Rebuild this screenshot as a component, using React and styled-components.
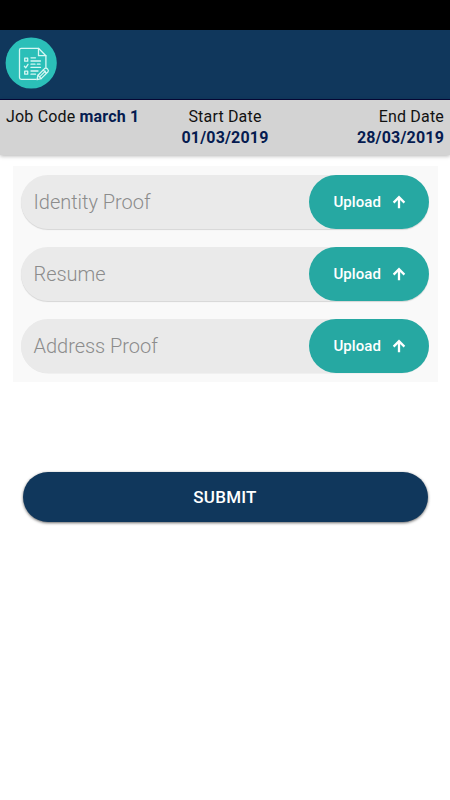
import React from 'react';
import styled, { createGlobalStyle } from 'styled-components';

const GlobalStyle = createGlobalStyle`
  * {
    box-sizing: border-box;
  }

  body {
    margin: 0;
    background: #ffffff;
    font-family: Roboto, sans-serif;
  }
`;

const Screen = styled.div`
  height: 800px;
  background: #ffffff;
  overflow: hidden;
`;

const StatusBar = styled.div`
  height: 30px;
  background: #000000;
`;

const Header = styled.header`
  height: 70px;
  padding: 7px 5px;
  background: #10375c;
  border-bottom: 1px solid #06083a;
`;

const Logo = styled.svg`
  display: block;
  width: 52px;
  height: 52px;
`;

const JobBar = styled.section`
  display: grid;
  grid-template-columns: 1fr 1fr 1fr;
  height: 55px;
  padding: 6px 6px 0;
  background: #d3d3d3;
  box-shadow: 0 1px 4px rgba(0, 0, 0, 0.3);
`;

const JobInfo = styled.div`
  font-size: 16px;
  line-height: 21px;
  letter-spacing: 0.18px;
  color: #111111;
  text-align: ${({ $align }) => $align || 'left'};
  white-space: nowrap;
`;

const Value = styled.strong`
  display: ${({ $block }) => ($block ? 'block' : 'inline')};
  font-weight: 700;
  color: #051b50;
`;

const Documents = styled.main`
  display: flex;
  flex-direction: column;
  gap: 18px;
  margin: 11px 12.5px 0 12.5px;
  padding: 9px 8.5px 9px;
  background: linear-gradient(#f9f9f9, #f9f9f9);
`;

const DocumentRow = styled.div`
  display: flex;
  align-items: center;
  justify-content: space-between;
  height: 54px;
  padding-left: 12.5px;
  border-radius: 27px;
  background: #eaeaea;
  box-shadow: ${({ $flat }) =>
    $flat ? '0 0.5px 0 #e8e8e8' : '0 1px 1px rgba(0, 0, 0, 0.14)'};
`;

const DocumentName = styled.span`
  font-size: 20px;
  font-weight: 300;
  letter-spacing: -0.03px;
  color: #8c8c8c;
`;

const UploadButton = styled.button`
  display: flex;
  align-items: center;
  width: 120px;
  height: 54px;
  padding: 0 0 0 24.5px;
  border: 0;
  border-radius: 27px;
  background: #26a8a2;
  color: #ffffff;
  font-family: inherit;
  font-size: 15px;
  font-weight: 500;
  letter-spacing: 0.05px;
`;

const ArrowIcon = styled.svg`
  width: 14px;
  height: 14px;
  margin-left: 11px;
`;

const SubmitButton = styled.button`
  display: block;
  width: 405px;
  height: 50px;
  margin: 90px auto 0;
  padding: 0 0 1px;
  border: 0;
  border-radius: 25px;
  background: #10375c;
  box-shadow: 0 1px 3px rgba(0, 0, 0, 0.6);
  color: #ffffff;
  font-family: inherit;
  font-size: 17px;
  font-weight: 500;
  letter-spacing: 0.25px;
`;

function FormLogo() {
  return (
    <Logo viewBox="0 0 52 52" fill="none">
      <circle cx="26.2" cy="26" r="25.6" fill="#2bbfb8" />
      <g
        stroke="#d7f7f3"
        strokeWidth="1.3"
        strokeLinecap="round"
        strokeLinejoin="round"
      >
        <path d="M31 42.3H16.2Q14.5 42.3 14.5 40.6V13Q14.5 11.3 16.2 11.3H33.5L40.9 18.7V30" />
        <path d="M33.5 11.3V18.7H40.9" />
        <path d="M19.7 21.2H22.7V24.2H19.7ZM19.7 34.2H22.7V37.2H19.7Z" />
        <path d="M19.4 29.3L20.7 30.8L23 27.3" />
        <path d="M26 20.8H30.5M26 24H35.5M26 27.2H30M32.3 27.2H35M26 30.4H35.5M26 34H33M26 37.2H30.5" />
        <path
          fill="#2bbfb8"
          d="M32 42.6L33 38.2L39.6 31.6Q41 30.4 42.2 31.7L42.8 32.4Q44 33.7 42.8 35L36.2 41.6Z"
        />
        <path d="M33 38.2L36.2 41.6M34.6 39.9L40.4 34.1M38.3 33L41.4 36.3" />
      </g>
    </Logo>
  );
}

function UploadArrow() {
  return (
    <ArrowIcon viewBox="0 0 14 14" fill="none">
      <path
        d="M7 13.2V2.2M1.6 7.6L7 2.2L12.4 7.6"
        stroke="#ffffff"
        strokeWidth="2.3"
      />
    </ArrowIcon>
  );
}

const documents = ['Identity Proof', 'Resume', 'Address Proof'];

function App() {
  return (
    <>
      <GlobalStyle />
      <Screen>
        <StatusBar />
        <Header>
          <FormLogo />
        </Header>
        <JobBar>
          <JobInfo>
            Job Code <Value>march 1</Value>
          </JobInfo>
          <JobInfo $align="center">
            Start Date
            <Value $block>01/03/2019</Value>
          </JobInfo>
          <JobInfo $align="right">
            End Date
            <Value $block>28/03/2019</Value>
          </JobInfo>
        </JobBar>
        <Documents>
          {documents.map((name, index) => (
            <DocumentRow key={name} $flat={index === documents.length - 1}>
              <DocumentName>{name}</DocumentName>
              <UploadButton type="button">
                Upload
                <UploadArrow />
              </UploadButton>
            </DocumentRow>
          ))}
        </Documents>
        <SubmitButton type="button">SUBMIT</SubmitButton>
      </Screen>
    </>
  );
}

export default App;
